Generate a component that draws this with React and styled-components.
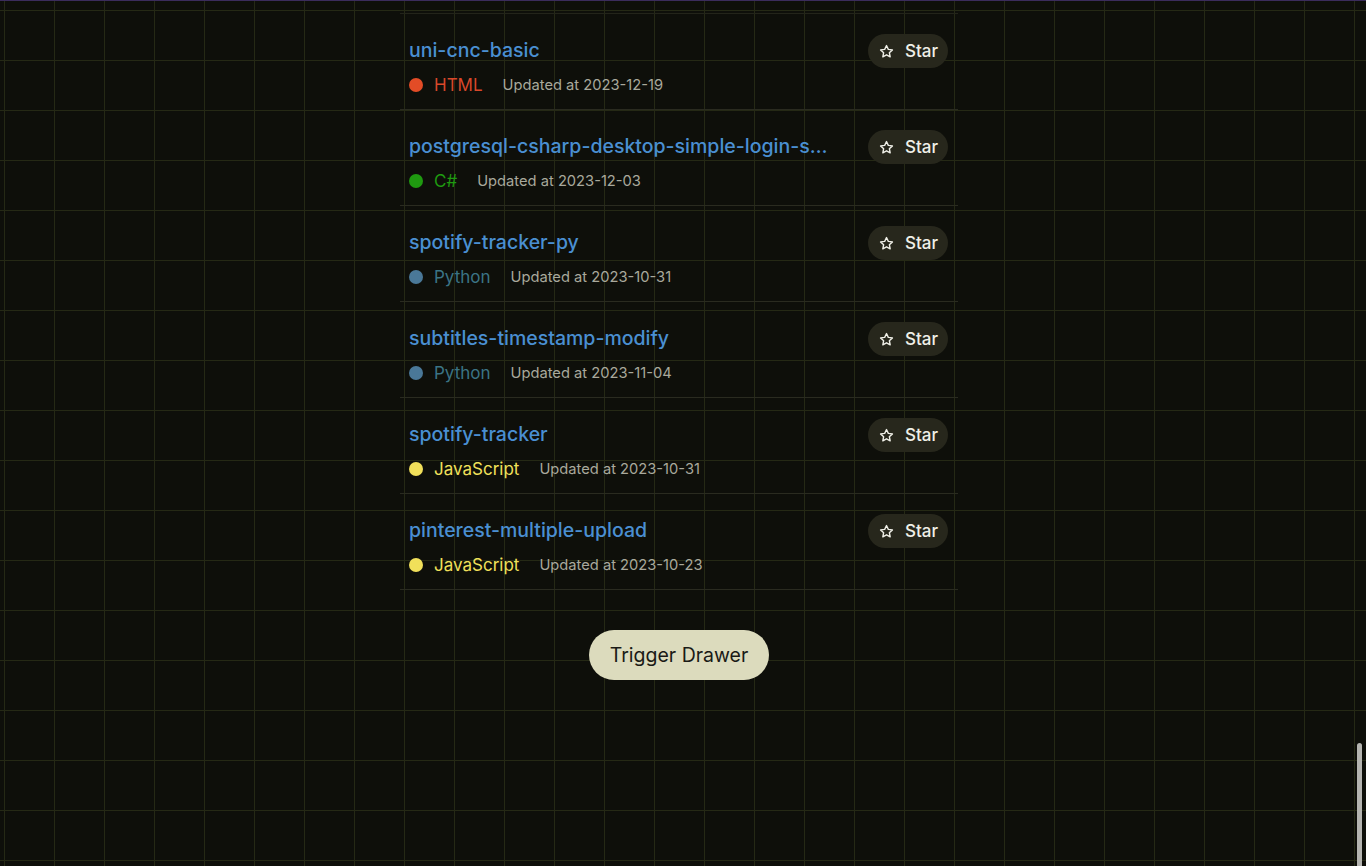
import styled, { createGlobalStyle } from "styled-components";

const GlobalStyle = createGlobalStyle`
  html, body {
    margin: 0;
    padding: 0;
    height: 100%;
    overflow: hidden;
  }

  body {
    background-color: #0e0f0a;
    background-image:
      linear-gradient(to right, #252915 1px, transparent 1px),
      linear-gradient(to bottom, #252915 1px, transparent 1px);
    background-size: 50px 50px;
    background-position: 4px 10px;
    border-top: 1px solid #3b2c5c;
    font-family: Inter, "Liberation Sans", sans-serif;
    color: #e8e8e0;
  }
`;

const languages = {
  HTML: { dot: "#e34c26", text: "#d9482a" },
  "C#": { dot: "#1f9a10", text: "#1f9a10" },
  Python: { dot: "#4a7898", text: "#3b7485" },
  JavaScript: { dot: "#f1e05a", text: "#f1e05a" },
};

const repos = [
  { name: "uni-cnc-basic", lang: "HTML", updated: "2023-12-19" },
  {
    name: "postgresql-csharp-desktop-simple-login-system",
    lang: "C#",
    updated: "2023-12-03",
  },
  { name: "spotify-tracker-py", lang: "Python", updated: "2023-10-31" },
  { name: "subtitles-timestamp-modify", lang: "Python", updated: "2023-11-04" },
  { name: "spotify-tracker", lang: "JavaScript", updated: "2023-10-31" },
  { name: "pinterest-multiple-upload", lang: "JavaScript", updated: "2023-10-23" },
];

const Page = styled.main`
  display: flex;
  flex-direction: column;
  align-items: center;
  padding: 12px 8px 0 0;
  min-height: 100vh;
  box-sizing: border-box;
`;

const List = styled.ul`
  list-style: none;
  margin: 0;
  padding: 0;
  width: 558px;
  border-top: 1px solid #23241a;
`;

const Row = styled.li`
  display: flex;
  justify-content: space-between;
  align-items: flex-start;
  height: 96px;
  padding: 23px 10px 0 9px;
  box-sizing: border-box;
  border-bottom: 1px solid #2a2b20;
`;

const Info = styled.div`
  display: flex;
  flex-direction: column;
  gap: 10px;
  min-width: 0;
`;

const Title = styled.a`
  display: block;
  max-width: 421px;
  font-size: 19.5px;
  font-weight: 500;
  line-height: 26px;
  color: #4a8fd2;
  text-decoration: none;
  white-space: nowrap;
  overflow: hidden;
  text-overflow: ellipsis;
`;

const Meta = styled.div`
  display: flex;
  align-items: center;
  font-size: 14.7px;
  line-height: 24px;
`;

const Dot = styled.span`
  width: 14px;
  height: 14px;
  border-radius: 50%;
  background: ${({ color }) => color};
  margin-right: 11px;
`;

const Lang = styled.span`
  color: ${({ color }) => color};
  font-size: 17px;
  margin-right: 20px;
`;

const Updated = styled.span`
  color: #a9a99c;
`;

const StarButton = styled.button`
  display: flex;
  align-items: center;
  gap: 11px;
  height: 34px;
  padding: 0 10px 0 11px;
  margin-top: -3px;
  border: none;
  border-radius: 17px;
  background: #27271c;
  color: #f0f0e8;
  font-family: inherit;
  font-size: 17px;
  font-weight: 500;
  cursor: pointer;

  svg {
    width: 15px;
    height: 15px;
  }
`;

const TriggerButton = styled.button`
  margin-top: 40px;
  width: 180px;
  height: 50px;
  border: none;
  border-radius: 25px;
  background: #dcdbbd;
  color: #1a1a16;
  font-family: inherit;
  font-size: 19.5px;
  cursor: pointer;
`;

const ScrollThumb = styled.div`
  position: fixed;
  right: 4px;
  bottom: 0;
  width: 5px;
  height: 123px;
  border-radius: 3px 3px 0 0;
  background: #b4b4b0;
`;

function StarIcon() {
  return (
    <svg viewBox="0 0 24 24" fill="none" stroke="currentColor" strokeWidth="2.2" strokeLinejoin="round">
      <path d="M12 2.5l2.9 6.1 6.6.8-4.9 4.6 1.3 6.6L12 17.3l-5.9 3.3 1.3-6.6-4.9-4.6 6.6-.8z" />
    </svg>
  );
}

function App() {
  return (
    <>
      <GlobalStyle />
      <Page>
        <List>
          {repos.map((repo) => {
            const lang = languages[repo.lang];
            return (
              <Row key={repo.name}>
                <Info>
                  <Title href="#">{repo.name}</Title>
                  <Meta>
                    <Dot color={lang.dot} />
                    <Lang color={lang.text}>{repo.lang}</Lang>
                    <Updated>Updated at {repo.updated}</Updated>
                  </Meta>
                </Info>
                <StarButton>
                  <StarIcon />
                  Star
                </StarButton>
              </Row>
            );
          })}
        </List>
        <TriggerButton>Trigger Drawer</TriggerButton>
      </Page>
      <ScrollThumb />
    </>
  );
}

export default App;
